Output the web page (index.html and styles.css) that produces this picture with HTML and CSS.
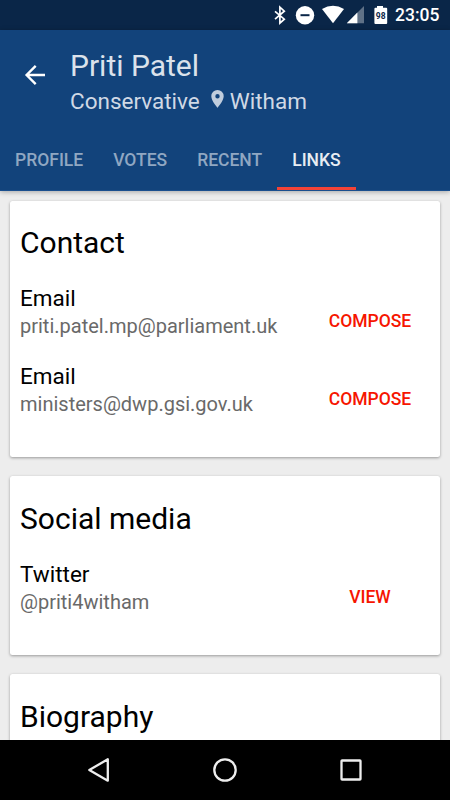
FILE: index.html
```html
<!DOCTYPE html>
<html lang="en">
<head>
<meta charset="utf-8">
<meta name="viewport" content="width=device-width, initial-scale=1">
<title>Priti Patel</title>
<link rel="stylesheet" href="styles.css">
</head>
<body>
<div class="status">
  <svg class="status-icons" width="130" height="30" viewBox="0 0 130 30" fill="#fff">
    <path d="M15 11.3L24.3 19.2L19.9 23.2V7.2L24.3 11.2L15 19.2" fill="none" stroke="#fff" stroke-width="1.7"/>
    <circle cx="45" cy="15.2" r="9.2"/><path class="cut" d="M40.5 14.2h9v2h-9z"/>
    <path d="M62 9.1Q73 2.6 84 9.1L73 23.3z"/>
    <path d="M104 6v17.2H86.8z" opacity=".35"/><path d="M97.4 12.6v10.6H86.8z"/>
    <path d="M117 6h6v1.8h3.2q1 0 1 1V23q0 1-1 1H115.400q-1 0-1-1V8.800q0-1 1-1H117z"/>
    <text class="battery" x="120.700" y="18.500" text-anchor="middle">98</text>
  </svg>
  <span class="clock">23:05</span>
</div>
<header class="header">
  <div class="bar">
    <svg class="back" width="22" height="22" viewBox="0 0 22 22" fill="none" stroke="#fff" stroke-width="2.400"><path d="M21 11H3M11.700 1.900L2.600 11l9.100 9.100"/></svg>
    <div>
      <h1 class="name">Priti Patel</h1>
      <div class="sub"><span>Conservative</span><svg class="pin" width="13" height="18" viewBox="0 0 13 18"><path fill-rule="evenodd" d="M6.500 0A6.200 6.200 0 0 0 .3 6.200C.3 10.800 6.500 17.700 6.500 17.700s6.200-6.900 6.200-11.500A6.200 6.200 0 0 0 6.500 0zm0 4a2.200 2.200 0 1 1 0 4.400 2.200 2.200 0 0 1 0-4.400z"/></svg><span>Witham</span></div>
    </div>
  </div>
  <nav class="tabs">
    <span class="tab">PROFILE</span><span class="tab">VOTES</span><span class="tab">RECENT</span><span class="tab active">LINKS</span>
  </nav>
</header>
<main class="content">
  <section class="card">
    <h2>Contact</h2>
    <div class="row"><div><div class="label">Email</div><div class="value">priti.patel.mp@parliament.uk</div></div><span class="action">COMPOSE</span></div>
    <div class="row"><div><div class="label">Email</div><div class="value">ministers@dwp.gsi.gov.uk</div></div><span class="action">COMPOSE</span></div>
  </section>
  <section class="card">
    <h2>Social media</h2>
    <div class="row"><div><div class="label">Twitter</div><div class="value">@priti4witham</div></div><span class="action">VIEW</span></div>
  </section>
  <section class="card">
    <h2>Biography</h2>
    <div class="row"></div>
  </section>
</main>
<footer class="nav">
  <svg width="24" height="26" viewBox="0 0 24 26"><path d="M20.800 2.300v21.400L2.300 13z"/></svg>
  <svg width="26" height="26" viewBox="0 0 26 26"><circle cx="13" cy="13" r="10.700"/></svg>
  <svg width="24" height="24" viewBox="0 0 24 24"><rect x="2.500" y="2.500" width="19" height="19" rx=".6"/></svg>
</footer>
</body>
</html>
```
FILE: styles.css
```css
* { box-sizing: border-box; }
body {
  margin: 0;
  width: 450px;
  height: 800px;
  overflow: hidden;
  display: flex;
  flex-direction: column;
  background: #ededed;
  font-family: Roboto, "Liberation Sans", sans-serif;
  color: #000;
}
h1, h2 { margin: 0; font-weight: 400; font-size: 30px; line-height: 36px; }
.status {
  flex: none;
  height: 30px;
  display: flex;
  padding-left: 260px;
  background: #0a2648;
  color: #fff;
}
.status-icons { flex: none; }
.cut { fill: #0a2648; }
.battery { font-size: 8.5px; font-weight: 700; fill: #0a2648; }
.clock { margin-left: 5px; font-size: 17.5px; font-weight: 500; line-height: 31px; }
.header {
  flex: none;
  height: 161px;
  display: flex;
  flex-direction: column;
  justify-content: space-between;
  background: #12437b;
  border-bottom: 1px solid #1a4f8e;
  box-shadow: 0 1px 5px rgba(0, 0, 0, .3);
  z-index: 1;
}
.bar { display: flex; padding: 18px 0 0 24px; }
.back { flex: none; margin: 16px 24px 0 0; }
.name { color: #dbe2eb; }
.sub {
  display: flex;
  align-items: center;
  font-size: 22.5px;
  line-height: 28px;
  margin-top: 3px;
  color: #d0d9e5;
}
.pin { margin: -4px 6px 0 11px; fill: #c0cddd; }
.tabs { display: flex; height: 60px; }
.tab {
  padding: 19px 15px 0;
  font-size: 17.5px;
  font-weight: 500;
  line-height: 22px;
  color: #90a7c2;
}
.active { color: #e8edf3; border-bottom: 3px solid #f44336; }
.content { flex: 1; min-height: 0; overflow: hidden; padding: 9.5px 10px 0; }
.card {
  margin-bottom: 19.5px;
  padding: 24.5px 0 17.5px 10px;
  background: #fff;
  border-radius: 2.5px;
  box-shadow: 0 1px 3px rgba(0, 0, 0, .36);
}
.card h2 { margin-bottom: 23px; }
.row { display: flex; justify-content: space-between; height: 77.5px; }
.label { font-size: 22.5px; line-height: 28px; }
.value { margin-top: 2px; font-size: 20px; line-height: 24px; color: #696969; }
.action {
  width: 140px;
  padding-top: 25px;
  text-align: center;
  font-size: 17.5px;
  font-weight: 500;
  line-height: 24px;
  color: #f61500;
}
.nav {
  flex: none;
  height: 60px;
  display: flex;
  align-items: center;
  justify-content: center;
  gap: 101px;
  background: #000;
}
.nav svg { fill: none; stroke: #eee; stroke-width: 2.3; stroke-linejoin: round; }
```
